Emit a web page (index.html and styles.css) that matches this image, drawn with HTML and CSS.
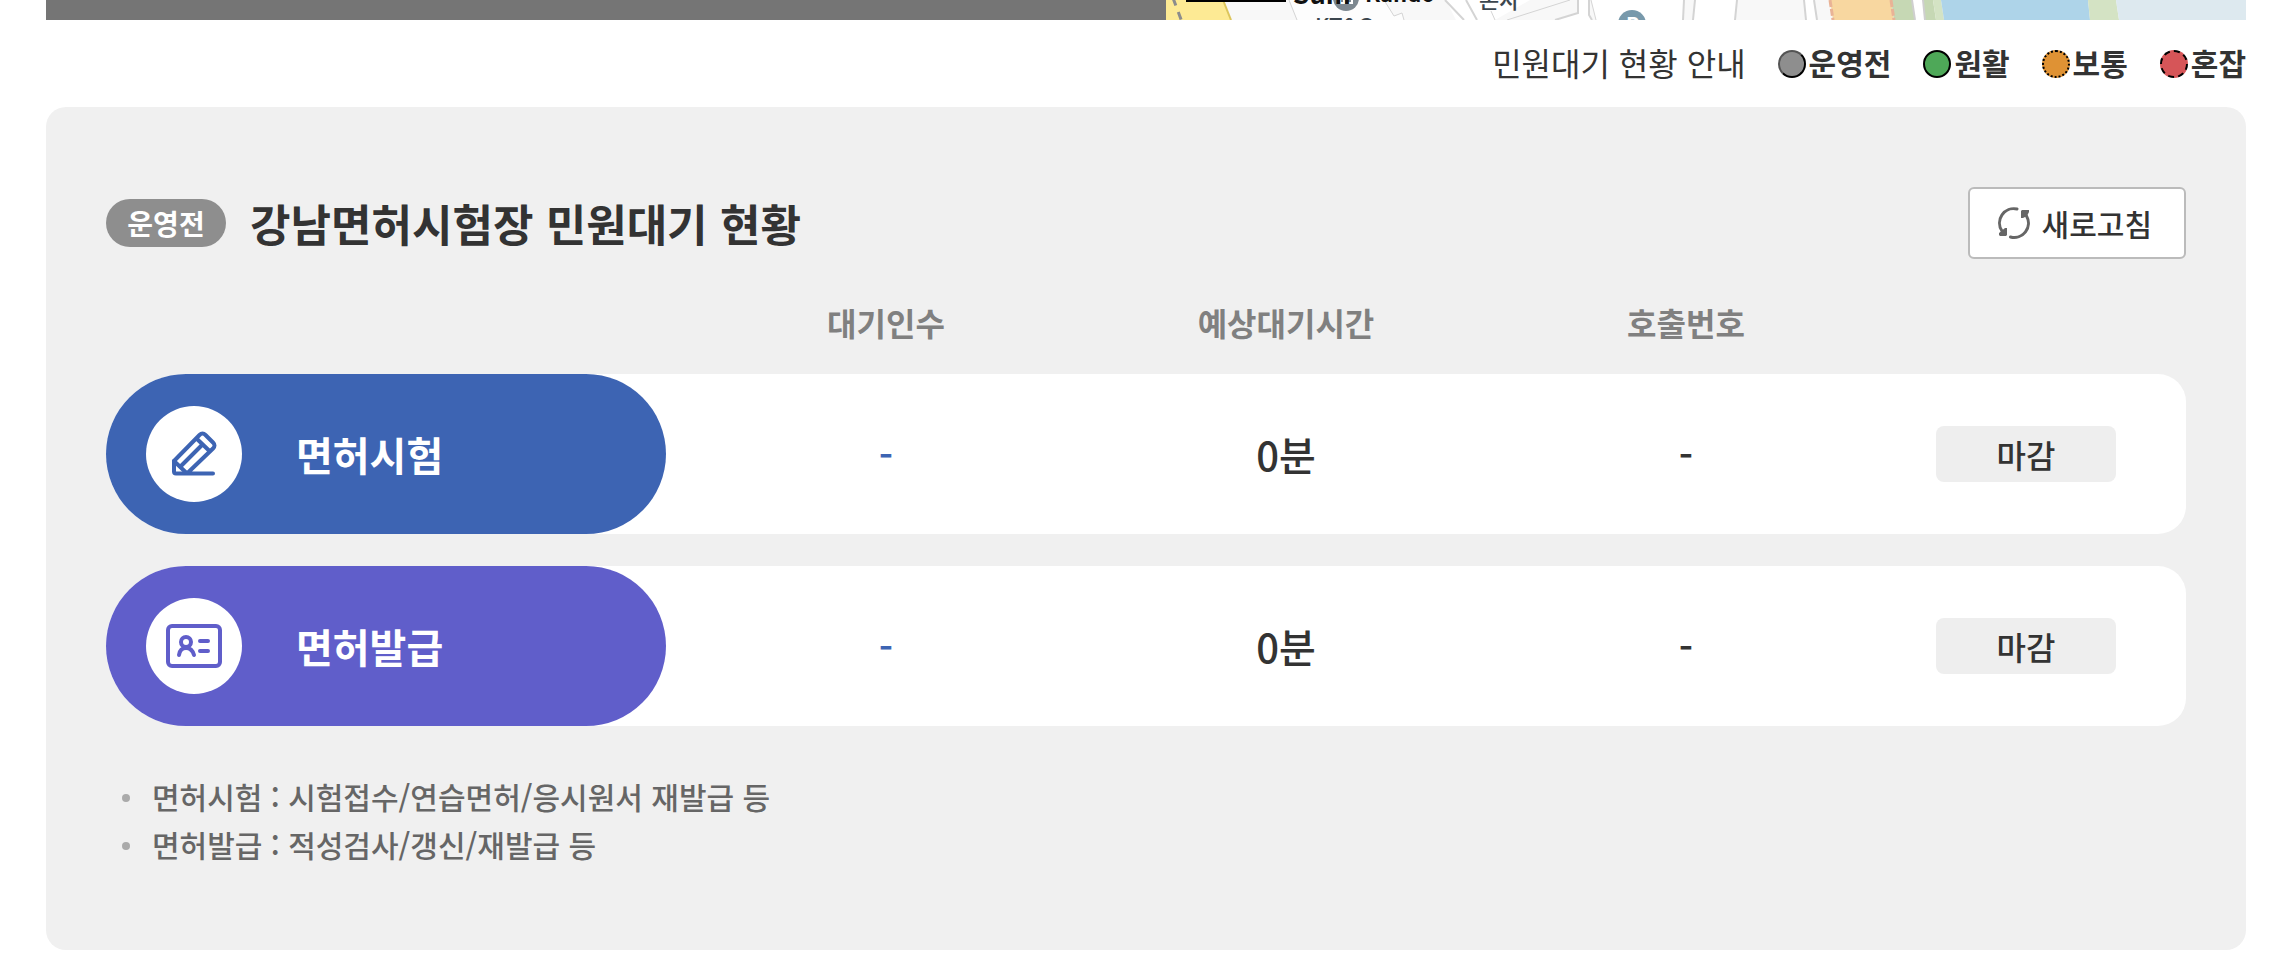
FILE: index.html
```
<!DOCTYPE html>
<html lang="ko">
<head>
    <meta charset="UTF-8">
    <meta name="viewport" content="width=device-width, initial-scale=1.0">
    <title>강남면허시험장 민원대기 현황</title>
    <link rel="stylesheet" href="styles.css">
</head>
<body>

<div class="container">
    <div class="location">
        <div class="location-photo"></div>
        <svg class="location-map" viewBox="0 0 1080 20" preserveAspectRatio="xMinYMin slice">
            <rect width="1080" height="20" fill="#f8f8f8"/>
            <!-- roads -->
            <path d="M123 0L131 20H299L279 0Z" fill="#fdfdfd"/>
            <path d="M228 16L236 13L238 20H299L291 0H218Z" fill="#f8f8f8"/>
            <path d="M280 0H300L311 20H290Z" fill="#fff"/>
            <path d="M300 0H364L329 20H311Z" fill="#fff"/>
            <path d="M412 0H423V15L426 20H389L412 13Z" fill="#fff"/>
            <path d="M425 0H518V20H430Z" fill="#fff"/>
            <path d="M529 0H571L569 20H527Z" fill="#fff"/>
            <path d="M638 0H648L651 20H640Z" fill="#fff"/>
            <path d="M123 0L131 20M218 0L228 16L236 13L238 20M325 11L329 20M404 0L341 20M425 0L430 20" fill="none" stroke="#d4d4d4" stroke-width="1"/>
            <path d="M279 0L298 20M300 0L311 20M412 0V13L389 20M423 0V15L426 20M518 0L517 20M529 0L527 20M571 0L569 20M638 0L640 20M648 0L651 20" fill="none" stroke="#d4d4d4" stroke-width="2"/>
            <path d="M0 0H57L65 20H0Z" fill="#fdea94"/>
            <path d="M57 0L65 20" stroke="#dcc55c" stroke-width="2"/>
            <path d="M7 -2L16 22" stroke="#8c8c8c" stroke-width="3" stroke-dasharray="8 7"/>
            <!-- riverside -->
            <path d="M664 0H725L728 20H667Z" fill="#f8d7a0"/>
            <path d="M725 0H746L749 20H728Z" fill="#c6d8b4"/>
            <path d="M746 0H757L759 20H749Z" fill="#fff"/>
            <path d="M757 0H767L770 20H759Z" fill="#c6d8b4"/>
            <path d="M767 0H775L778 20H770Z" fill="#d4e3c4"/>
            <path d="M775 0H922L924 20H778Z" fill="#aed4e9"/>
            <path d="M922 0H950L953 20H924Z" fill="#d4e3c4"/>
            <path d="M950 0H1080V20H953Z" fill="#dde9ef"/>
            <path d="M746 0L749 20M757 0L759 20" stroke="#cfcfcf" stroke-width="2"/>
            <path d="M664 0L667 20M725 0L728 20" stroke="#e9b396" stroke-width="3" stroke-dasharray="7 2"/>
            <!-- places -->
            <circle cx="180" cy="-2" r="13" fill="#7d8890"/>
            <path d="M174 0V3H178V0M181 0V3H186V0" fill="none" stroke="#fff" stroke-width="2"/>
            <circle cx="466" cy="24" r="14" fill="#7899ab"/>
            <path d="M20 0H120V2H20Z"/>
            <text class="map-name map-name-bold" x="127" y="4">Sum</text>
            <text class="map-name" x="199" y="2">Kando</text>
            <text class="map-label" x="313" y="8">본사</text>
            <text class="map-label" x="149" y="34">KT&amp;G</text>
            <text class="map-mark" x="460" y="32">P</text>
        </svg>
    </div>

    <div class="legend">
        <span class="legend-title">민원대기 현황 안내</span>
        <span class="legend-item"><i class="dot dot-before"></i>운영전</span>
        <span class="legend-item"><i class="dot dot-smooth"></i>원활</span>
        <span class="legend-item"><i class="dot dot-normal"></i>보통</span>
        <span class="legend-item"><i class="dot dot-busy"></i>혼잡</span>
    </div>

    <section class="waiting">
        <div class="waiting-head">
            <span class="badge">운영전</span>
            <h2>강남면허시험장 민원대기 현황</h2>
            <button type="button" class="refresh">
                <svg width="32" height="32" viewBox="0 0 32 32">
                    <path d="M19 2A14.300 14.300 0 0 0 4 24M28.500 9A14.300 14.300 0 0 1 12.500 30" fill="none" stroke="#666" stroke-width="3" stroke-linecap="round"/>
                    <path d="M1 28V26L7 21H9V28L8 29H2ZM23 4L24 3H31V5L29 9L25 11H23Z" fill="#666"/>
                </svg>
                새로고침
            </button>
        </div>

        <table class="waiting-table">
            <colgroup>
                <col class="col-name">
                <col>
                <col>
                <col>
                <col class="col-state">
            </colgroup>
            <thead>
                <tr>
                    <td></td>
                    <th scope="col">대기인수</th>
                    <th scope="col">예상대기시간</th>
                    <th scope="col">호출번호</th>
                    <td></td>
                </tr>
            </thead>
            <tbody>
                <tr>
                    <th scope="row">
                        <div class="task task-exam">
                            <span class="task-icon">
                                <svg width="48" height="48" viewBox="0 0 48 48" fill="none" stroke="#3d64b3" stroke-width="4" stroke-linecap="round" stroke-linejoin="round">
                                    <path d="M43 43.500H6Q4 43.500 4 41.500V31L29.500 5Q32.500 2 35.500 5L43 12.500Q46 15.500 43 18.500L17 43.500"/>
                                    <path d="M4 31L16.500 43M27 9L39.500 21M11 36L31 16"/>
                                </svg>
                            </span>
                            면허시험
                        </div>
                    </th>
                    <td class="count">-</td>
                    <td>0분</td>
                    <td>-</td>
                    <td class="state"><span class="closed">마감</span></td>
                </tr>
                <tr>
                    <th scope="row">
                        <div class="task task-issue">
                            <span class="task-icon">
                                <svg width="56" height="44" viewBox="0 0 56 44" fill="none" stroke="#605eca" stroke-width="4" stroke-linecap="round" stroke-linejoin="round">
                                    <rect x="2" y="2" width="52" height="40" rx="4"/>
                                    <circle cx="20" cy="18" r="5"/>
                                    <path d="M13 31Q14 24 20 24Q26 24 28 31M34 17H42M34 27H42"/>
                                </svg>
                            </span>
                            면허발급
                        </div>
                    </th>
                    <td class="count">-</td>
                    <td>0분</td>
                    <td>-</td>
                    <td class="state"><span class="closed">마감</span></td>
                </tr>
            </tbody>
        </table>

        <ul class="notes">
            <li>면허시험 : 시험접수/연습면허/응시원서 재발급 등</li>
            <li>면허발급 : 적성검사/갱신/재발급 등</li>
        </ul>
    </section>
</div>

</body>
</html>
```
FILE: styles.css
```
* {
    box-sizing: border-box;
}

body {
    margin: 0;
    font-family: "Noto Sans CJK KR", sans-serif;
    font-weight: 500;
    color: #333;
    background-color: #fff;
}

.container {
    padding: 0 44px 28px 46px;
}

/* map strip */
.location {
    display: flex;
    height: 20px;
}

.location-photo {
    flex: 1120 1 0;
    background-color: #757575;
}

.location-map {
    flex: 1080 1 0;
    min-width: 0;
    height: 20px;
    overflow: hidden;
}

.map-name {
    font-size: 22px;
    font-weight: 700;
    fill: #111;
}

.map-name-bold {
    font-size: 26px;
}

.map-label {
    font-size: 22px;
    fill: #3c464e;
}

.map-mark {
    font-size: 20px;
    font-weight: 700;
    fill: #fff;
}

/* legend */
.legend {
    display: flex;
    justify-content: flex-end;
    align-items: center;
    gap: 32px;
    padding: 18px 0 21px;
    line-height: 48px;
}

.legend-title {
    font-size: 32px;
    font-weight: 400;
}

.legend-item {
    display: flex;
    align-items: center;
    gap: 3px;
    font-size: 30px;
    font-weight: 700;
}

.dot {
    width: 28px;
    height: 28px;
    margin-top: 4px;
    border: 2px solid #000;
    border-radius: 50%;
}

.dot-before {
    background-color: #8e8e8e;
    border-style: outset;
}

.dot-smooth {
    background-color: #4ea858;
}

.dot-normal {
    background-color: #df9234;
    border-style: dotted;
}

.dot-busy {
    background-color: #d65558;
    border-style: dashed;
}

/* waiting status */
.waiting {
    padding: 80px 60px;
    background-color: #f0f0f0;
    border-radius: 20px;
}

.waiting-head {
    display: flex;
    align-items: center;
    gap: 24px;
}

.badge {
    width: 120px;
    border-radius: 24px;
    background-color: #8e8e8e;
    color: #fff;
    font-size: 28px;
    font-weight: 700;
    line-height: 48px;
    text-align: center;
}

.waiting-head h2 {
    margin: 0;
    font-size: 44px;
    font-weight: 700;
    line-height: 72px;
}

.refresh {
    display: flex;
    align-items: center;
    gap: 12px;
    height: 72px;
    margin-left: auto;
    padding: 0 32px 0 28px;
    border: 2px solid #bbb;
    border-radius: 6px;
    background-color: #fff;
    color: #333;
    font-family: inherit;
    font-size: 30px;
    font-weight: 500;
    cursor: pointer;
}

.waiting-table {
    width: 100%;
    margin-top: 15px;
    table-layout: fixed;
    border-spacing: 0 32px;
    text-align: center;
}

.waiting-table th,
.waiting-table td {
    padding: 0;
}

.col-name {
    width: 580px;
}

.col-state {
    width: 300px;
}

.waiting-table thead th {
    padding-bottom: 4px;
    color: #808080;
    font-size: 32px;
    font-weight: 700;
    line-height: 32px;
}

.waiting-table tbody th,
.waiting-table tbody td {
    background-color: #fff;
    font-size: 40px;
    font-weight: 500;
}

.waiting-table tbody th {
    padding-right: 20px;
    border-radius: 80px 0 0 80px;
    font-weight: 700;
}

.waiting-table tbody .count {
    color: #3d64b3;
}

.waiting-table tbody .state {
    padding-right: 20px;
    border-radius: 0 28px 28px 0;
    font-size: 32px;
}

.task {
    display: flex;
    align-items: center;
    gap: 54px;
    height: 160px;
    padding: 0 40px;
    border-radius: 80px;
    color: #fff;
}

.task-exam {
    background-color: #3d64b3;
}

.task-issue {
    background-color: #605eca;
}

.task-icon {
    display: flex;
    justify-content: center;
    align-items: center;
    width: 96px;
    height: 96px;
    border-radius: 50%;
    background-color: #fff;
}

.closed {
    display: block;
    width: 180px;
    margin: 0 auto;
    border-radius: 8px;
    background-color: #eee;
    line-height: 56px;
}

.notes {
    margin: 14px 0 2px;
    padding: 0;
    list-style: none;
    color: #666;
    font-size: 30px;
    line-height: 48px;
}

.notes li {
    display: flex;
    align-items: center;
    gap: 22px;
    padding-left: 16px;
}

.notes li::before {
    content: "";
    width: 8px;
    height: 8px;
    margin-top: 4px;
    border-radius: 50%;
    background-color: #aaa;
}
```
